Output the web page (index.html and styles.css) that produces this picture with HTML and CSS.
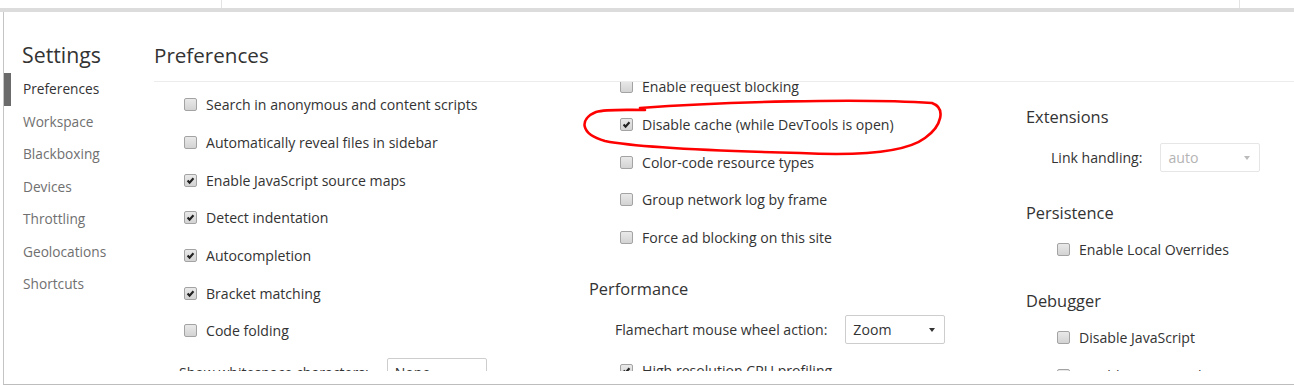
FILE: index.html
```html
<!DOCTYPE html>
<html lang="en">
<head>
  <meta charset="UTF-8" />
  <title>Settings</title>
  <link rel="stylesheet" href="styles.css">
</head>
<body>
  <div class="page-strip">
    <div class="strip-left"></div>
    <div class="strip-mid"></div>
  </div>

  <div class="dialog">
    <!-- SIDEBAR -->
    <div class="sidebar">
      <div class="sidebar-title">Settings</div>
      <ul class="tab-list">
        <li class="tab active">Preferences</li>
        <li class="tab">Workspace</li>
        <li class="tab">Blackboxing</li>
        <li class="tab">Devices</li>
        <li class="tab">Throttling</li>
        <li class="tab">Geolocations</li>
        <li class="tab">Shortcuts</li>
      </ul>
    </div>

    <!-- PREFERENCES -->
    <div class="main">
      <div class="main-title">Preferences</div>
      <div class="columns">
        <div class="column col-1">
          <label class="row"><span class="check"></span>Search in anonymous and content scripts</label>
          <label class="row"><span class="check"></span>Automatically reveal files in sidebar</label>
          <label class="row"><span class="check on"><svg viewBox="0 0 13 13"><path d="M3 6.6 L5.4 9 L10 3.8"/></svg></span>Enable JavaScript source maps</label>
          <label class="row"><span class="check on"><svg viewBox="0 0 13 13"><path d="M3 6.6 L5.4 9 L10 3.8"/></svg></span>Detect indentation</label>
          <label class="row"><span class="check on"><svg viewBox="0 0 13 13"><path d="M3 6.6 L5.4 9 L10 3.8"/></svg></span>Autocompletion</label>
          <label class="row"><span class="check on"><svg viewBox="0 0 13 13"><path d="M3 6.6 L5.4 9 L10 3.8"/></svg></span>Bracket matching</label>
          <label class="row"><span class="check"></span>Code folding</label>
          <div class="select-row">
            <span class="select-label">Show whitespace characters:</span>
            <span class="select">None<i class="arrow"></i></span>
          </div>
        </div>

        <div class="column col-2">
          <label class="row"><span class="check"></span>Enable request blocking</label>
          <label class="row"><span class="check on"><svg viewBox="0 0 13 13"><path d="M3 6.6 L5.4 9 L10 3.8"/></svg></span>Disable cache (while DevTools is open)</label>
          <label class="row"><span class="check"></span>Color-code resource types</label>
          <label class="row"><span class="check"></span>Group network log by frame</label>
          <label class="row"><span class="check"></span>Force ad blocking on this site</label>
          <div class="section-title">Performance</div>
          <div class="select-row">
            <span class="select-label">Flamechart mouse wheel action:</span>
            <span class="select">Zoom<i class="arrow"></i></span>
          </div>
          <label class="row"><span class="check on"><svg viewBox="0 0 13 13"><path d="M3 6.6 L5.4 9 L10 3.8"/></svg></span>High resolution CPU profiling</label>
        </div>

        <div class="column col-3">
          <div class="section-title">Extensions</div>
          <div class="select-row">
            <span class="select-label">Link handling:</span>
            <span class="select disabled">auto<i class="arrow"></i></span>
          </div>
          <div class="section-title">Persistence</div>
          <label class="row wide"><span class="check"></span>Enable Local Overrides</label>
          <div class="section-title">Debugger</div>
          <label class="row wide"><span class="check"></span>Disable JavaScript</label>
          <label class="row wide"><span class="check"></span>Disable async stack traces</label>
        </div>
      </div>
    </div>
  </div>

  <!-- hand drawn mark -->
  <svg class="scribble" viewBox="0 0 1294 385">
    <path d="M640 108 C720 102 860 98 932 103 C946 108 942 126 925 138 C905 153 860 156 800 153 C720 151 640 148 605 141 C580 134 579 119 596 112 C606 109 625 110 645 110"/>
  </svg>
</body>
</html>
```

FILE: styles.css
```css
html, body {
  margin: 0;
  padding: 0;
  background: #fff;
  font-family: 'Open Sans', 'Noto Sans', Arial, sans-serif;
  color: #333;
  overflow: hidden;
}
/* -- page behind the dialog -- */
.page-strip {
  display: flex;
  height: 8px;
  border-bottom: 4px solid #dcdcdc;
  box-sizing: content-box;
}
.strip-left {
  width: 221px;
  border-right: 1px solid #e3e3e3;
}
.strip-mid {
  width: 1017px;
  border-right: 1px solid #e3e3e3;
}
/* -- DIALOG -- */
.dialog {
  display: flex;
  height: 372px;
  margin-left: 3px;
  border-left: 1px solid #c4c4c4;
  border-bottom: 1px solid #bdbdbd;
  background: #fff;
}
.sidebar {
  width: 150px;
  flex-shrink: 0;
}
.sidebar-title {
  font-size: 21.3px;
  line-height: 28px;
  padding: 29px 0 4px 18px;
  color: #333;
}
.tab-list {
  list-style: none;
  margin: 0;
  padding: 0;
}
.tab {
  height: 32.5px;
  line-height: 32.5px;
  padding-left: 19px;
  font-size: 13.7px;
  color: #707070;
}
.tab.active {
  color: #333;
  box-shadow: inset 7px 0 0 #6b6b6b;
}
.main {
  flex: 1;
  min-width: 0;
}
.main-title {
  font-size: 20.6px;
  line-height: 28px;
  padding: 29px 0 12px 0;
  border-bottom: 1px solid #ececec;
  color: #333;
}
.columns {
  display: flex;
  height: 289px;
  overflow: hidden;
}
.column {
  width: 436px;
  flex-shrink: 0;
}
.col-1 { padding-top: 4px; }
.col-2 { margin-top: -14px; }
.col-3 { padding-top: 2.5px; }
/* -- ROWS -- */
.row {
  display: flex;
  align-items: center;
  height: 37.7px;
  padding-left: 30px;
  font-size: 14.1px;
  color: #333;
}
.row.wide { padding-left: 31px; }
.check {
  width: 11px;
  height: 11px;
  border: 1px solid #a3a3a3;
  border-radius: 2px;
  background: linear-gradient(#e9e9e9, #d3d3d3);
  margin-right: 9px;
  display: flex;
  flex-shrink: 0;
}
.check svg {
  width: 11px;
  height: 11px;
}
.check svg path {
  fill: none;
  stroke: #222;
  stroke-width: 2.5;
}
.section-title {
  font-size: 16.4px;
  height: 36px;
  line-height: 36px;
  margin-top: 14.5px;
  color: #333;
}
.col-2 .section-title { margin-left: -1px; }
.select-row {
  display: flex;
  align-items: center;
  height: 45px;
  padding-left: 25px;
  gap: 18px;
  font-size: 14.1px;
}
.select {
  position: relative;
  width: 91px;
  height: 27px;
  line-height: 27px;
  padding-left: 7px;
  border: 1px solid #cdcdcd;
  border-radius: 2px;
  background: #fff;
  font-size: 14.1px;
  color: #333;
}
.select.disabled {
  border-color: #e6e6e6;
  color: #b3b3b3;
}
.arrow {
  position: absolute;
  right: 9px;
  top: 12px;
  border-left: 3.5px solid transparent;
  border-right: 3.5px solid transparent;
  border-top: 4px solid #333;
}
.select.disabled .arrow { border-top-color: #bbb; }
/* -- annotation -- */
.scribble {
  position: absolute;
  left: 0;
  top: 0;
  width: 1294px;
  height: 385px;
  pointer-events: none;
}
.scribble path {
  fill: none;
  stroke: #f00;
  stroke-width: 2.6;
  stroke-linecap: round;
}
```
